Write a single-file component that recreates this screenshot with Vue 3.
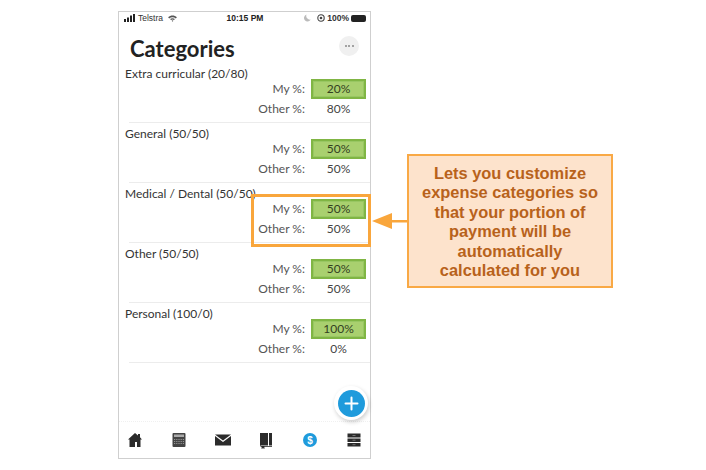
<script setup>
const categories = [
  { name: 'Extra curricular (20/80)', my: '20%', other: '80%' },
  { name: 'General (50/50)', my: '50%', other: '50%' },
  { name: 'Medical / Dental (50/50)', my: '50%', other: '50%' },
  { name: 'Other (50/50)', my: '50%', other: '50%' },
  { name: 'Personal (100/0)', my: '100%', other: '0%' }
]
</script>

<template>
  <div class="page">
    <div class="phone">
      <div class="status">
        <div class="status-left">
          <svg width="12" height="8" viewBox="0 0 12 8">
            <rect x="0" y="5" width="2" height="3" fill="#222" />
            <rect x="3" y="3.5" width="2" height="4.5" fill="#222" />
            <rect x="6" y="1.5" width="2" height="6.5" fill="#222" />
            <rect x="9" y="0" width="2" height="8" fill="#222" />
          </svg>
          <span>Telstra</span>
          <svg class="wifi" width="9" height="7" viewBox="0 0 10 8">
            <path d="M0 2.6C2.8 0 7.200 0 10 2.6L8.800 3.900C6.600 2 3.400 2 1.200 3.900Z" fill="#555" />
            <path d="M2.200 4.700C3.800 3.300 6.200 3.300 7.800 4.700L6.700 5.800C5.700 5 4.300 5 3.300 5.800Z" fill="#555" />
            <path d="M4 6.500L5 5.900L6 6.500L5 7.800Z" fill="#555" />
          </svg>
        </div>
        <div class="time">10:15 PM</div>
        <div class="status-right">
          <svg width="7" height="8" viewBox="0 0 7 8">
            <path d="M2.500 .5A3.600 3.600 0 1 0 6.800 5.600A3.800 3.800 0 0 1 2.500 .5Z" fill="#bbb" />
          </svg>
          <svg class="lock" width="8" height="8" viewBox="0 0 8 8">
            <circle cx="4" cy="4" r="3.200" fill="none" stroke="#444" stroke-width="1.100" />
            <circle cx="4" cy="4" r="1.300" fill="#444" />
          </svg>
          <span>100%</span>
          <div class="battery"></div>
        </div>
      </div>

      <div class="header">
        <h1>Categories</h1>
        <button class="more"><i></i><i></i><i></i></button>
      </div>

      <div class="list">
        <div class="row" v-for="c in categories" :key="c.name">
          <div class="name">{{ c.name }}</div>
          <div class="line">
            <span class="label">My %:</span>
            <span class="field">{{ c.my }}</span>
          </div>
          <div class="line">
            <span class="label">Other %:</span>
            <span class="value">{{ c.other }}</span>
          </div>
        </div>
      </div>

      <div class="fab">
        <svg width="27" height="27" viewBox="0 0 27 27">
          <circle cx="13.500" cy="13.500" r="13.500" fill="#1f9bdc" />
          <path d="M13.500 7.500V19.500M7.500 13.500H19.500" stroke="#fff" stroke-width="2" stroke-linecap="round" />
        </svg>
      </div>

      <div class="tabs">
        <svg width="20" height="20" viewBox="0 0 20 20">
          <path d="M10 3L13 5.600V4H15V7.300L17 9.500H15.500V17H12V12H10V17H4.500V9.500H3Z" fill="#2b2b2b" />
        </svg>
        <svg width="20" height="20" viewBox="0 0 20 20">
          <rect x="3.500" y="3" width="13" height="14" rx="1" fill="#444" />
          <rect x="5" y="4.500" width="10" height="2.500" fill="#aaa" />
          <path d="M5 9.500H15M5 11.500H15M5 13.500H15" stroke="#aaa" stroke-width=".8" stroke-dasharray="1 .8" />
        </svg>
        <svg width="20" height="20" viewBox="0 0 20 20">
          <path d="M2 4.500H18L10 10.500Z" fill="#2b2b2b" />
          <path d="M2 6L10 12L18 6V15.500H2Z" fill="#2b2b2b" />
        </svg>
        <svg width="20" height="20" viewBox="0 0 20 20">
          <path d="M4 3H12V15.500H5.500C4.700 15.500 4 16 4 16Z" fill="#2b2b2b" />
          <path d="M13 3H16V15.500H13Z" fill="#2b2b2b" />
          <path d="M4.500 16.500H16M6 16V18.500L7 17.500L8 18.500V16" stroke="#2b2b2b" stroke-width=".8" fill="#2b2b2b" />
        </svg>
        <svg width="20" height="20" viewBox="0 0 20 20">
          <circle cx="10" cy="10" r="7" fill="#1f9bdc" />
          <text x="10" y="13.500" text-anchor="middle" class="dollar">$</text>
        </svg>
        <svg width="20" height="20" viewBox="0 0 20 20">
          <path d="M3.500 3.500H16.500V7.500H3.500ZM3.500 8.500H16.500V12H3.500ZM3.500 13H16.500V16.500H3.500Z" fill="#2b2b2b" />
          <path d="M8.500 5.500H11.500M8.500 10.200H11.500M8.500 14.700H11.500" stroke="#888" stroke-width=".8" />
        </svg>
      </div>

      <div class="highlight"></div>
    </div>

    <div class="callout">
      <svg class="arrow" width="36" height="18" viewBox="0 0 36 18">
        <path d="M1 9L21 1V17Z" fill="#f9a63c" />
        <rect x="20" y="8" width="16" height="2.500" fill="#f9a63c" />
      </svg>
      Lets you customize expense categories so that your portion of payment will be automatically calculated for you
    </div>
  </div>
</template>

<style scoped>
.page {
  width: 706px;
  height: 470px;
  box-sizing: border-box;
  padding: 11px 0 0 118px;
  display: flex;
  align-items: flex-start;
  background: #fff;
  overflow: hidden;
  font-family: Lato, "Liberation Sans", sans-serif;
}

.phone {
  position: relative;
  width: 253px;
  height: 448px;
  box-sizing: border-box;
  border: 1px solid #cfcfcf;
  display: flex;
  flex-direction: column;
}

.status {
  height: 12px;
  padding: 0 4px 0 5px;
  display: flex;
  align-items: center;
  justify-content: space-between;
  font-family: "Liberation Sans", sans-serif;
  font-size: 8.5px;
  color: #333;
}

.status-left,
.status-right {
  width: 90px;
  display: flex;
  align-items: center;
  gap: 2px;
}

.status-right {
  justify-content: flex-end;
  font-weight: bold;
}

.wifi {
  margin-left: 3px;
}

.lock {
  margin-left: 4px;
}

.time {
  font-weight: bold;
  font-size: 8.500px;
  color: #222;
}

.battery {
  width: 15px;
  height: 7px;
  border-radius: 2px;
  background: #222;
}

.header {
  height: 39px;
  display: flex;
  justify-content: space-between;
  padding: 0 11px 0 11px;
}

h1 {
  margin: 13px 0 0;
  font-size: 22px;
  line-height: 24px;
  font-weight: 700;
  color: #222;
}

.more {
  margin-top: 12px;
  width: 20px;
  height: 20px;
  padding: 0;
  border: 0;
  border-radius: 50%;
  background: #f0f0f0;
  display: flex;
  align-items: center;
  justify-content: center;
  gap: 1.500px;
}

.more i {
  width: 2px;
  height: 2px;
  border-radius: 50%;
  background: #888;
}

.row {
  height: 60px;
  box-sizing: border-box;
  margin-left: 10px;
  padding-top: 3px;
  border-bottom: 1px solid #ececec;
}

.name {
  margin-left: -4px;
  height: 16px;
  line-height: 16px;
  font-size: 12px;
  color: #333;
  white-space: nowrap;
}

.line {
  height: 20px;
  display: flex;
  align-items: center;
  font-size: 12px;
  line-height: 18px;
  color: #555;
}

.name + .line {
  margin-top: -3px;
}

.label {
  width: 176px;
  text-align: right;
}

.field,
.value {
  width: 55px;
  margin-left: 6px;
  text-align: center;
  color: #444;
}

.field {
  height: 20px;
  line-height: 15px;
  box-sizing: border-box;
  border: 2px solid #80b544;
  box-shadow: inset 0 0 0 1px #98c762;
  background: #a9d06f;
  color: #33401f;
}

.fab {
  position: absolute;
  left: 215px;
  top: 374px;
  width: 34px;
  height: 34px;
  border-radius: 50%;
  background: #fff;
  box-shadow: 1px 2px 4px rgba(0, 0, 0, 0.2);
  display: flex;
  align-items: center;
  justify-content: center;
}

.tabs {
  margin-top: auto;
  height: 36px;
  padding: 0 6px;
  border-top: 1px dotted #f0f0f0;
  display: flex;
  align-items: center;
  justify-content: space-between;
}

.dollar {
  font-family: "Liberation Sans", sans-serif;
  font-size: 10px;
  font-weight: bold;
  fill: #fff;
}

.highlight {
  position: absolute;
  left: 132px;
  top: 182px;
  width: 120px;
  height: 53px;
  box-sizing: border-box;
  border: 3px solid #f9a63c;
}

.callout {
  position: relative;
  width: 206px;
  height: 134px;
  margin: 143px 0 0 36px;
  padding: 8px 12px 0;
  box-sizing: border-box;
  border: 2px solid #f9a945;
  background: #fde3cc;
  color: #b8621b;
  font-family: "Liberation Sans", sans-serif;
  font-size: 16.400px;
  line-height: 19.400px;
  font-weight: bold;
  text-align: center;
}

.arrow {
  position: absolute;
  left: -38px;
  top: 56px;
}
</style>

<style>
html,
body {
  margin: 0;
  background: #fff;
}
</style>
